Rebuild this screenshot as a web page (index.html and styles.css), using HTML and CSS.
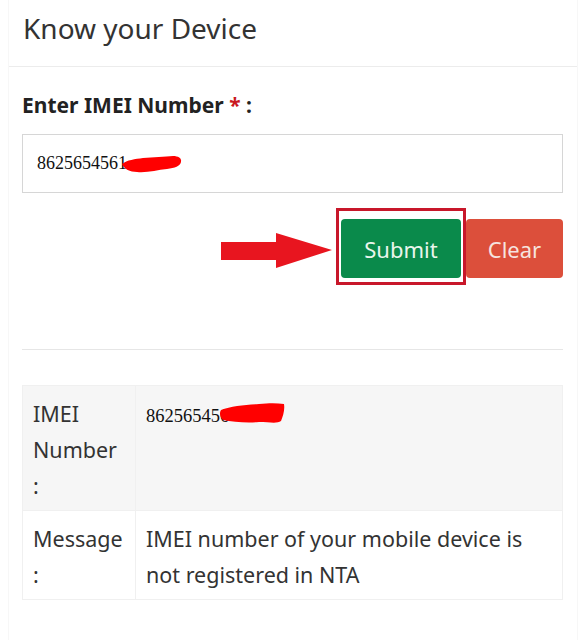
FILE: index.html
```html
<!DOCTYPE html>
<html>
<head>
<meta charset="utf-8">
<link rel="stylesheet" href="styles.css">
</head>
<body>
<div class="card">
  <div class="card-header">
    <h1 class="title">Know your Device</h1>
  </div>
  <div class="card-body">
    <label class="field-label">Enter IMEI Number <span class="req">*</span> :</label>
    <div class="input-box">
      <span class="imei-text">8625654561</span><svg class="scribble s1" width="62" height="22" viewBox="0 0 62 22"><path d="M1 10 C6 6 14 5 22 4 C32 3 44 3 52 2 C57 2 61 4 60 8 C59 12 54 14 46 15 C36 16 26 19 16 18 C9 18 3 15 1 10 Z" fill="#ff0000"/></svg>
    </div>
    <div class="actions">
      <svg class="arrow" width="112" height="36" viewBox="0 0 112 36"><path d="M0 9 L55 9 L55 0 L111 17 L55 35 L55 27 L0 27 Z" fill="#e8151f"/></svg>
      <div class="highlight"><button class="btn btn-submit">Submit</button></div>
      <button class="btn btn-clear">Clear</button>
    </div>
    <div class="divider"></div>
    <table class="result">
      <tr class="shaded">
        <td class="key">IMEI Number :</td>
        <td class="val"><span class="imei-text">862565456</span><svg class="scribble s2" width="66" height="24" viewBox="0 0 66 24"><path d="M2 8 C12 4 26 3 40 2 C50 1 58 1 65 2 C66 8 64 14 62 19 C58 22 50 20 40 20 C28 21 14 20 4 18 C1 15 0 11 2 8 Z" fill="#ff0000"/></svg></td>
      </tr>
      <tr>
        <td class="key">Message :</td>
        <td class="val">IMEI number of your mobile device is not registered in NTA</td>
      </tr>
    </table>
  </div>
</div>
</body>
</html>
```
FILE: styles.css
```css
html, body {
  margin: 0;
  padding: 0;
  background: #ffffff;
}
body {
  font-family: "Noto Sans", "Open Sans", sans-serif;
  color: #333;
}
.card {
  margin: 0 5px 0 8px;
  padding-bottom: 40px;
  border-left: 1px solid #f7f7f7;
  border-right: 1px solid #f7f7f7;
}
.card-header {
  height: 66px;
  border-bottom: 1px solid #ececec;
  padding-left: 14px;
  display: flex;
  align-items: center;
}
.title {
  margin: 0;
  font-weight: 400;
  font-size: 28px;
  letter-spacing: 0;
  color: #333;
  position: relative;
  top: -5px;
}
.card-body {
  padding: 26px 14px 0 13px;
}
.field-label {
  display: block;
  font-weight: 700;
  font-size: 21px;
  letter-spacing: 0;
  color: #222;
  line-height: 24px;
}
.req {
  color: #c9181e;
}
.input-box {
  margin-top: 17px;
  height: 57px;
  border: 1px solid #d6d6d6;
  display: flex;
  align-items: center;
  padding-left: 14px;
}
.imei-text {
  font-family: "Liberation Serif", serif;
  font-size: 18px;
  color: #111;
}
.scribble {
  vertical-align: middle;
}
.s1 {
  margin-left: -6px;
  position: relative;
  top: 1px;
}
.s2 {
  margin-left: -10px;
  position: relative;
  top: -2px;
}
.actions {
  margin-top: 15px;
  display: flex;
  justify-content: flex-end;
  align-items: center;
}
.arrow {
  margin-right: 3px;
  margin-top: 8px;
}
.highlight {
  border: 3px solid #c8172a;
  padding: 8px 2px 4px 2px;
}
.btn {
  font-family: "Noto Sans", "Open Sans", sans-serif;
  font-size: 22px;
  letter-spacing: 0;
  color: #e9f5ec;
  border: none;
  border-radius: 4px;
  height: 59px;
  display: flex;
  align-items: center;
  justify-content: center;
}
.btn-submit {
  background: #0a8a4b;
  width: 120px;
}
.btn-clear {
  background: #dc4f3b;
  color: #f6e3df;
  width: 97px;
  margin-left: 0;
  margin-top: 4px;
}
.divider {
  margin-top: 64px;
  border-top: 1px solid #e6e6e6;
}
.result {
  margin-top: 35px;
  width: 100%;
  border-collapse: collapse;
  font-size: 21.5px;
  letter-spacing: 0;
  color: #333;
  line-height: 36px;
}
.result td {
  border: 1px solid #f0f0f0;
  vertical-align: top;
  padding: 10px 10px 6px 10px;
}
.result .key {
  width: 92px;
}
.shaded td {
  background: #f6f6f6;
}
.val .imei-text {
  font-size: 18.5px;
}
```
